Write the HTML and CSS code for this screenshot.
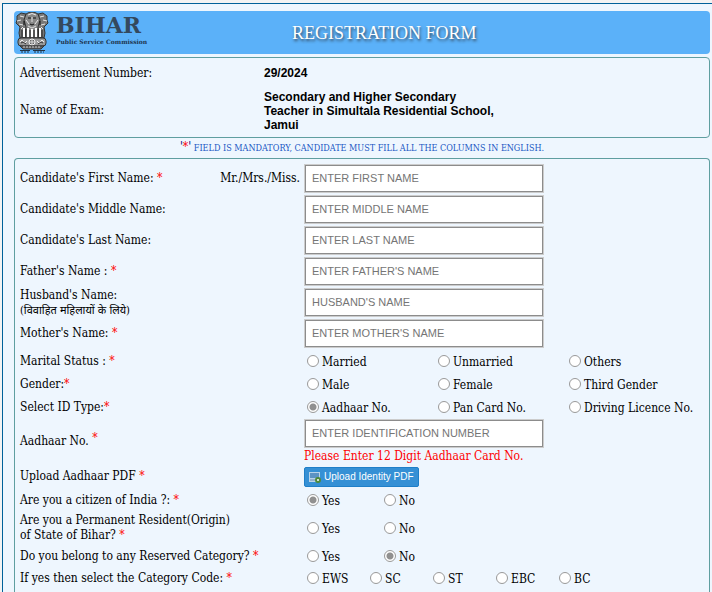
FILE: index.html
```html
<!DOCTYPE html>
<html lang="en">
<head>
    <meta charset="UTF-8">
    <meta name="viewport" content="width=device-width, initial-scale=1.0">
    <title>Registration Form</title>
    <link rel="stylesheet" href="styles.css">
</head>
<body>
    <div class="page">
        <header class="header">
            <div class="logo">
                <svg class="emblem" viewBox="0 0 34 41" aria-hidden="true">
                    <!-- side lions -->
                    <path d="M2 4 L6 1 L11 2 L13 10 L12 25 L5 26 L4 21 L5 15 L1 11 L2 8 Z" fill="#777" stroke="#333"/>
                    <path d="M32 4 L28 1 L23 2 L21 10 L22 25 L29 26 L30 21 L29 15 L33 11 L32 8 Z" fill="#777" stroke="#333"/>
                    <!-- front lion -->
                    <path d="M11 2 Q17 -2 23 2 L25 8 L23 15 L24 26 H10 L11 15 L9 8 Z" fill="#888" stroke="#333"/>
                    <path d="M13 3 Q17 0 21 3 M2 9 L6 8 M28 8 L32 9 M4 12 L8 13 M26 13 L30 12 M5 4 L9 5 M29 4 L25 5 M11 8 L14 12 M23 8 L20 12 M6 17 L8 15 M28 17 L26 15" fill="none" stroke="#e8e8e8"/>
                    <path d="M13 6 H16 M18 6 H21 M15 12 Q17 14 19 12 M9 9 V13 M25 9 V13" fill="none" stroke="#111"/>
                    <path d="M17 5 V10 M13 14 L17 16 L21 14" fill="none" stroke="#ddd"/>
                    <path d="M9 16 V25 M13 16 V25 M21 16 V25 M25 16 V25 M17 17 V25" stroke="#fff" stroke-width="2"/>
                    <path d="M11 17 V26 M15 18 V26 M19 18 V26 M23 17 V26 M7 18 V25 M27 18 V25" stroke="#222"/>
                    <!-- abacus with wheel -->
                    <rect x="3" y="26" width="28" height="8" rx="3" fill="#999" stroke="#333"/>
                    <circle cx="17" cy="30" r="3" fill="#666" stroke="#eee"/>
                    <path d="M14 30 H20 M17 27 V33" stroke="#ddd"/>
                    <path d="M5 30 L7 28 L10 31 L12 29 M22 29 L24 31 L27 28 L29 30" fill="none" stroke="#eee"/>
                    <path d="M6 31 L8 30 L11 32 M23 32 L26 30 L28 31" fill="none" stroke="#333"/>
                    <path d="M5 34 H29 L26 37 H8 Z" fill="#666" stroke="#333"/>
                    <path d="M8 35 H26" stroke="#ccc" stroke-dasharray="2 1"/>
                    <!-- motto line -->
                    <path d="M5 38.500 H15 M18 38.500 H30" stroke="#234"/>
                    <path d="M6 40 H14 M19 40 H29" stroke="#234" stroke-dasharray="2 1"/>
                </svg>
                <div class="brand">
                    <span class="brand-name">BIHAR</span>
                    <span class="brand-sub">Public Service Commission</span>
                </div>
            </div>
            <h1>REGISTRATION FORM</h1>
        </header>

        <dl class="panel exam">
            <dt>Advertisement Number:</dt>
            <dd>29/2024</dd>
            <dt>Name of Exam:</dt>
            <dd>Secondary and Higher Secondary Teacher in Simultala Residential School, Jamui</dd>
        </dl>

        <p class="note"><span class="quote">'<span class="req">*</span>'</span> FIELD IS MANDATORY, CANDIDATE MUST FILL ALL THE COLUMNS IN ENGLISH.</p>

        <form class="panel form">
            <div class="row text-row">
                <div class="caption">
                    <label for="firstName">Candidate's First Name: <span class="req">*</span></label>
                    <span>Mr./Mrs./Miss.</span>
                </div>
                <input type="text" id="firstName" placeholder="ENTER FIRST NAME">
            </div>
            <div class="row text-row">
                <label for="middleName">Candidate's Middle Name:</label>
                <input type="text" id="middleName" placeholder="ENTER MIDDLE NAME">
            </div>
            <div class="row text-row">
                <label for="lastName">Candidate's Last Name:</label>
                <input type="text" id="lastName" placeholder="ENTER LAST NAME">
            </div>
            <div class="row text-row">
                <label for="fatherName">Father's Name : <span class="req">*</span></label>
                <input type="text" id="fatherName" placeholder="ENTER FATHER'S NAME">
            </div>
            <div class="row text-row">
                <label for="husbandName">Husband's Name:<br><span class="hindi" lang="hi">(विवाहित महिलायों के लिये)</span></label>
                <input type="text" id="husbandName" placeholder="HUSBAND'S NAME">
            </div>
            <div class="row text-row">
                <label for="motherName">Mother's Name: <span class="req">*</span></label>
                <input type="text" id="motherName" placeholder="ENTER MOTHER'S NAME">
            </div>

            <div class="row tall" role="radiogroup" aria-labelledby="maritalLabel">
                <span id="maritalLabel">Marital Status : <span class="req">*</span></span>
                <div class="options wide">
                    <label><input type="radio" name="marital">Married</label>
                    <label><input type="radio" name="marital">Unmarried</label>
                    <label><input type="radio" name="marital">Others</label>
                </div>
            </div>
            <div class="row" role="radiogroup" aria-labelledby="genderLabel">
                <span id="genderLabel">Gender:<span class="req">*</span></span>
                <div class="options wide">
                    <label><input type="radio" name="gender">Male</label>
                    <label><input type="radio" name="gender">Female</label>
                    <label><input type="radio" name="gender">Third Gender</label>
                </div>
            </div>
            <div class="row tall" role="radiogroup" aria-labelledby="idTypeLabel">
                <span id="idTypeLabel">Select ID Type:<span class="req">*</span></span>
                <div class="options wide">
                    <label><input type="radio" name="idType" checked>Aadhaar No.</label>
                    <label><input type="radio" name="idType">Pan Card No.</label>
                    <label><input type="radio" name="idType">Driving Licence No.</label>
                </div>
            </div>

            <div class="row">
                <label for="aadhaar">Aadhaar No. <span class="req raised">*</span></label>
                <div class="field">
                    <input type="text" id="aadhaar" placeholder="ENTER IDENTIFICATION NUMBER">
                    <span class="error">Please Enter 12 Digit Aadhaar Card No.</span>
                </div>
            </div>
            <div class="row upload-row">
                <span id="uploadLabel">Upload Aadhaar PDF <span class="req">*</span></span>
                <button type="button" class="upload" aria-describedby="uploadLabel">
                    <svg class="upload-icon" viewBox="0 0 12 12" aria-hidden="true">
                        <rect x="0" y="1" width="11" height="10" fill="#b9d3ea"/>
                        <rect x="1" y="2" width="9" height="5" fill="#5d93c4"/>
                        <path d="M1 9 H6" stroke="#6c8faf"/>
                        <circle cx="9" cy="9" r="3" fill="#4f8a3c"/>
                        <path d="M8 9 H10 M9 8 V10" stroke="#fff"/>
                    </svg>
                    Upload Identity PDF
                </button>
            </div>

            <div class="row" role="radiogroup" aria-labelledby="citizenLabel">
                <span id="citizenLabel">Are you a citizen of India ?: <span class="req">*</span></span>
                <div class="options yes-no">
                    <label><input type="radio" name="citizen" checked>Yes</label>
                    <label><input type="radio" name="citizen">No</label>
                </div>
            </div>
            <div class="row resident" role="radiogroup" aria-labelledby="residentLabel">
                <span id="residentLabel">Are you a Permanent Resident(Origin)<br>of State of Bihar? <span class="req">*</span></span>
                <div class="options yes-no">
                    <label><input type="radio" name="resident">Yes</label>
                    <label><input type="radio" name="resident">No</label>
                </div>
            </div>
            <div class="row" role="radiogroup" aria-labelledby="reservedLabel">
                <span id="reservedLabel">Do you belong to any Reserved Category? <span class="req">*</span></span>
                <div class="options yes-no">
                    <label><input type="radio" name="reserved">Yes</label>
                    <label><input type="radio" name="reserved" checked>No</label>
                </div>
            </div>
            <div class="row" role="radiogroup" aria-labelledby="categoryLabel">
                <span id="categoryLabel">If yes then select the Category Code: <span class="req">*</span></span>
                <div class="options category">
                    <label><input type="radio" name="category">EWS</label>
                    <label><input type="radio" name="category">SC</label>
                    <label><input type="radio" name="category">ST</label>
                    <label><input type="radio" name="category">EBC</label>
                    <label><input type="radio" name="category">BC</label>
                </div>
            </div>
        </form>
    </div>
</body>
</html>
```
FILE: styles.css
```css
* {
    box-sizing: border-box;
}
body {
    margin: 0;
    padding: 3px 0 0 2px;
    background-color: #f3f3f3;
    font-family: 'DejaVu Serif Condensed', 'DejaVu Serif', 'Noto Sans', serif;
    font-size: 12px;
    line-height: 15px;
    color: #000;
}
.page {
    display: flex;
    flex-direction: column;
    min-height: calc(100vh - 3px);
    padding: 7px 2px 0 11px;
    border-top: 1px solid #00619a;
    border-left: 1px solid #00619a;
    background-color: #eef6fe;
}
.header {
    display: grid;
    grid-template-columns: 278px 1fr;
    align-items: center;
    height: 43px;
    border-radius: 4px;
    background-color: #5bb1f9;
}
.logo {
    display: flex;
    gap: 7px;
    padding-left: 1px;
}
.emblem {
    width: 34px;
    height: 41px;
}
.brand {
    display: flex;
    flex-direction: column;
    font-family: 'DejaVu Serif', serif;
    font-weight: bold;
    color: #34495e;
}
.brand-name {
    font-size: 22px;
    line-height: 26px;
}
.brand-sub {
    font-size: 6px;
    line-height: 7px;
    color: #1d3550;
}
h1 {
    margin: 0;
    font-family: 'Liberation Serif', serif;
    font-size: 18px;
    font-weight: normal;
    line-height: 22px;
    color: #fff;
    text-shadow: 1px 2px 3px #345;
}
.panel {
    border: 1px solid #5f9ea0;
    border-radius: 4px;
}
.exam {
    display: grid;
    grid-template-columns: 244px 240px;
    grid-template-rows: 30px 1fr;
    height: 81px;
    margin: 3px 0 0;
    padding: 0 0 4px 5px;
    align-items: center;
}
.exam dd {
    margin: 0;
    font-family: 'Liberation Sans', Arial, sans-serif;
    font-size: 12px;
    font-weight: bold;
    line-height: 14px;
}
.note {
    margin: 0;
    padding: 3px 0 2px;
    text-align: center;
    font-size: 9px;
    color: #1b58c4;
}
.quote {
    font-size: 12px;
    line-height: 12px;
    color: #000080;
}
.req {
    color: #f00;
}
.raised {
    vertical-align: 3px;
    line-height: 1px;
}
.form {
    flex: 1;
    padding: 4px 0 3px 5px;
    border-bottom: 0;
    border-radius: 4px 4px 0 0;
}
.row {
    display: grid;
    grid-template-columns: 284px 1fr;
    align-items: center;
    min-height: 22px;
}
.text-row {
    min-height: 31px;
}
.tall {
    min-height: 24px;
}
.upload-row {
    min-height: 25px;
}
.resident {
    min-height: 34px;
}
.caption {
    display: flex;
    justify-content: space-between;
    padding-right: 4px;
}
.hindi {
    font-size: 11px;
}
input[type="text"] {
    width: 240px;
    height: 29px;
    padding: 0 6px 2px;
    border: 2px solid #ccc;
    outline: 1px solid #8c8c8c;
    outline-offset: -2px;
    border-radius: 0;
    background-color: #fff;
    font-family: 'Liberation Sans', Arial, sans-serif;
    font-size: 11px;
}
input[type="text"]::placeholder {
    color: #757575;
}
.field {
    display: flex;
    flex-direction: column;
}
.error {
    line-height: 16px;
    color: #f00;
}
.options {
    display: grid;
    padding: 2px 0 0 3px;
}
.options label {
    display: flex;
    align-items: flex-start;
    gap: 3px;
    white-space: nowrap;
}
.wide {
    grid-template-columns: 131px 131px 1fr;
}
.yes-no {
    grid-template-columns: 77px 1fr;
}
.category {
    grid-template-columns: repeat(4, 63px) 1fr;
}
input[type="radio"] {
    appearance: none;
    width: 12px;
    height: 12px;
    margin: 0;
    border: 1px solid #999;
    border-radius: 50%;
    background-color: #fff;
}
input[type="radio"]:checked {
    background-image: radial-gradient(circle, #909090 3px, #fff 4px);
}
.upload {
    display: flex;
    align-items: center;
    justify-self: start;
    gap: 3px;
    height: 20px;
    padding: 0 4px;
    border: 1px solid #1f7fc8;
    border-radius: 2px;
    background-color: #3590d5;
    font-family: 'Liberation Sans', Arial, sans-serif;
    font-size: 10px;
    color: #fff;
}
.upload-icon {
    width: 12px;
    height: 12px;
}
```
